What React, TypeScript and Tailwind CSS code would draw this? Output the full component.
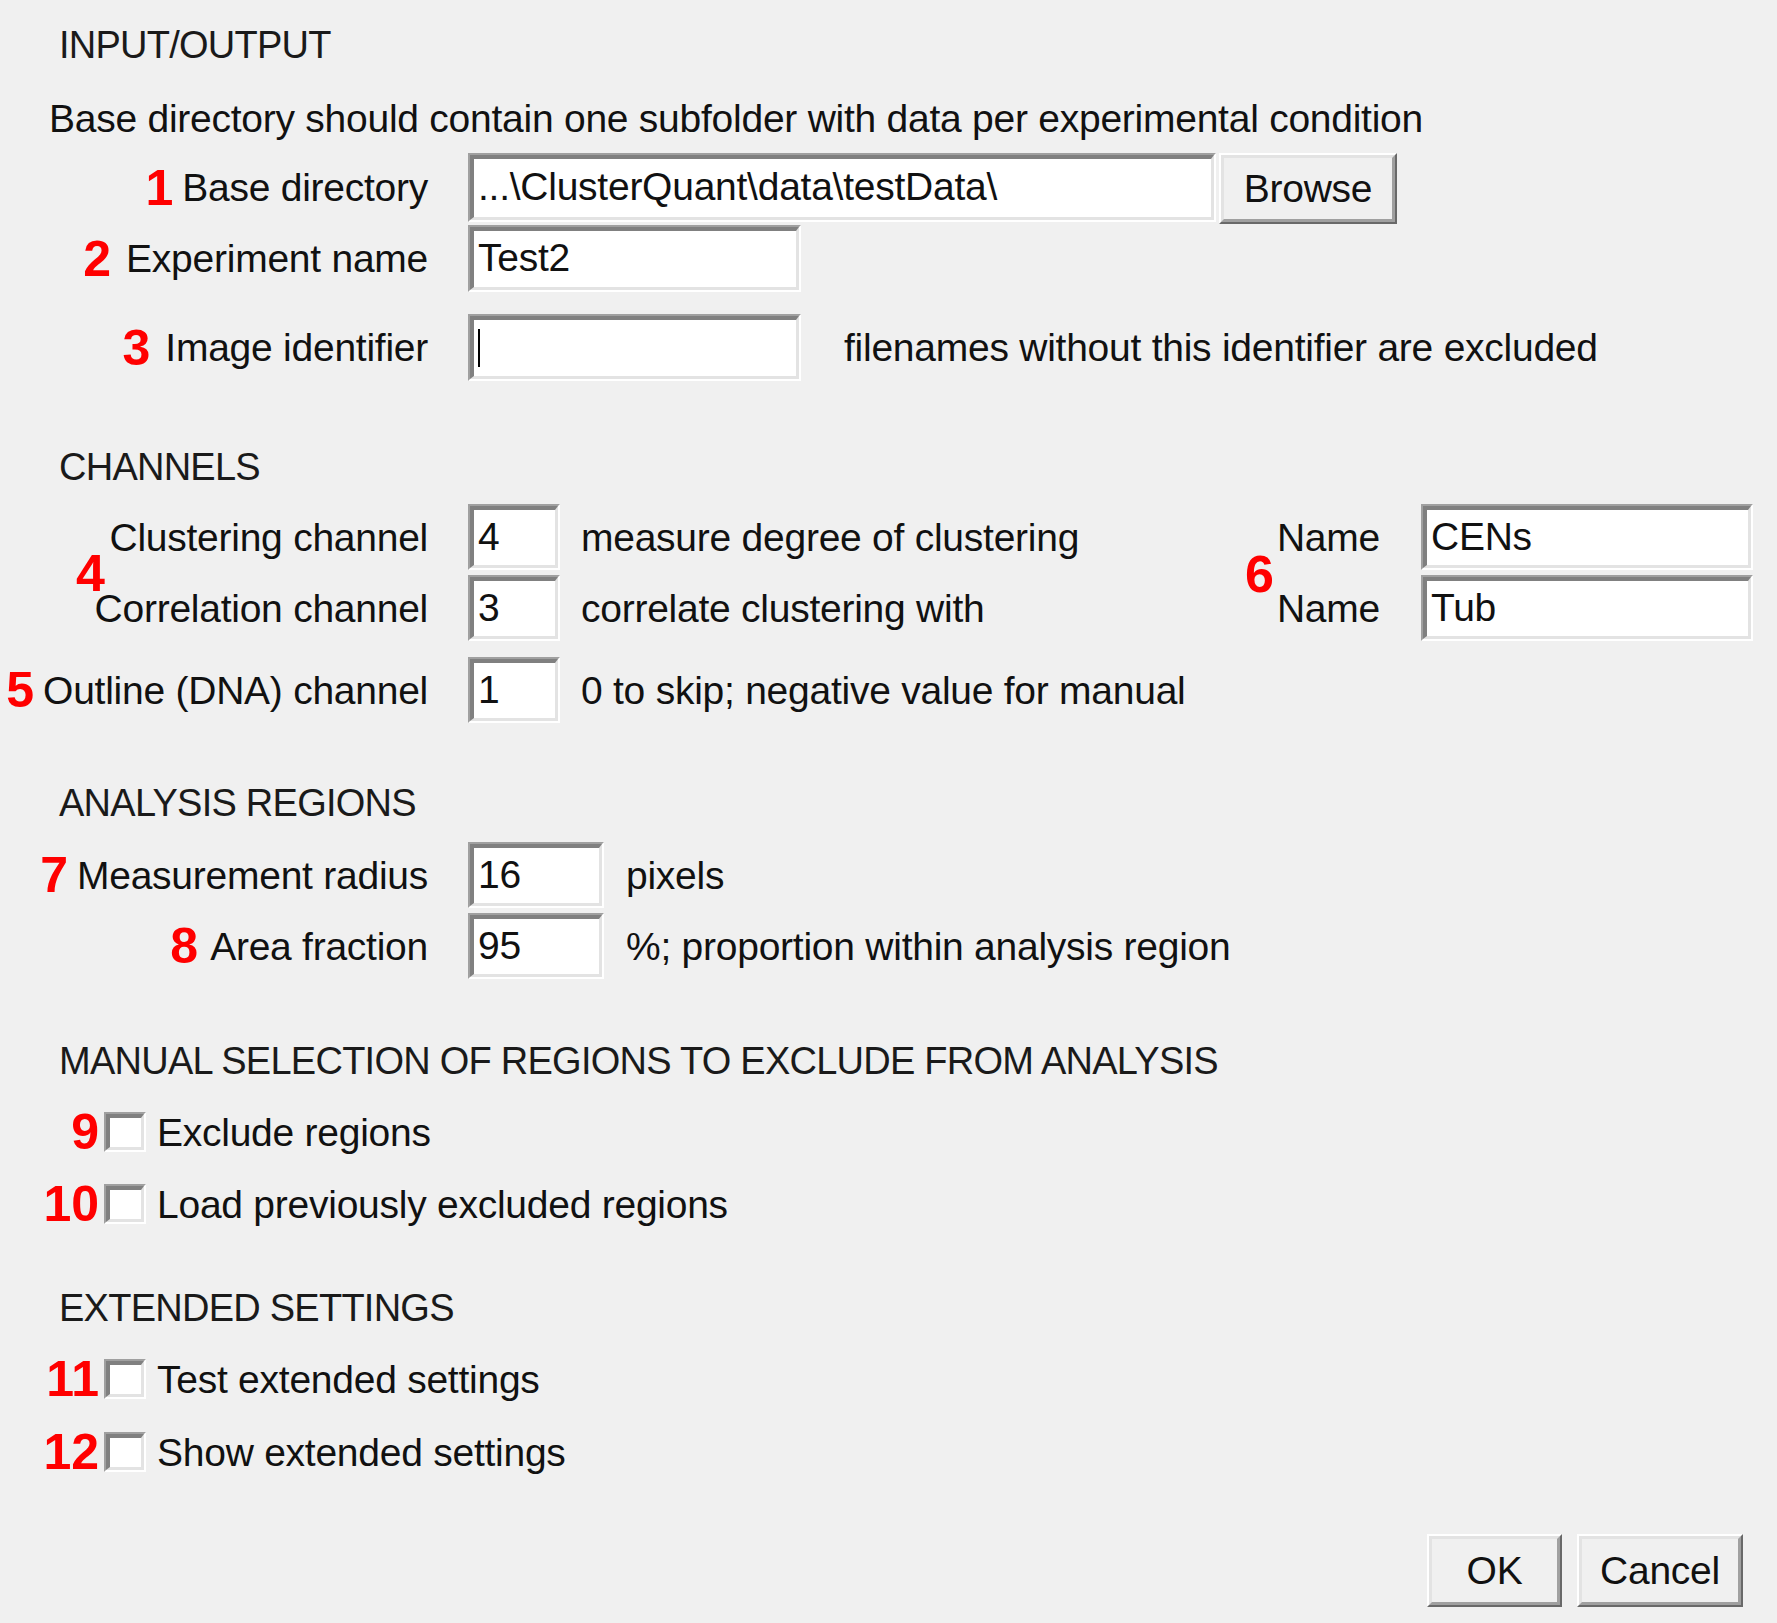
function Sunken({ className, children }: { className: string; children?: React.ReactNode }) {
  return (
    <div className={`${className} shrink-0 border-2 border-t-[#a0a0a0] border-l-[#a0a0a0] border-b-white border-r-white`}>
      <div className="flex h-full w-full items-center border-t-4 border-l-4 border-b-[3px] border-r-[3px] border-t-[#808080] border-l-[#808080] border-b-[#e3e3e3] border-r-[#e3e3e3] bg-white pb-[3px] pl-[4px] text-[39px] leading-none text-[#111]">
        {children}
      </div>
    </div>
  );
}

function Button({ className, label }: { className: string; label: string }) {
  return (
    <div className={`${className} shrink-0 border-2 border-t-white border-l-white border-b-[#696969] border-r-[#696969]`}>
      <div className="flex h-full w-full items-center justify-center border-[3px] border-t-[#e3e3e3] border-l-[#e3e3e3] border-b-[#a0a0a0] border-r-[#a0a0a0] bg-[#f0f0f0] text-[39px] leading-none text-[#111]">
        {label}
      </div>
    </div>
  );
}

function Num({ n, className = "" }: { n: string; className?: string }) {
  return <span className={`text-[50px] font-bold leading-none tracking-normal text-[#ff0000] ${className}`}>{n}</span>;
}

function Heading({ text, className }: { text: string; className: string }) {
  return (
    <div className={`${className} flex h-[40px] items-center pl-[59px] text-[38px] leading-none tracking-[-0.75px] text-[#1a1a1a]`}>
      {text}
    </div>
  );
}

function Label({ num, gap, text }: { num?: string; gap?: string; text: string }) {
  return (
    <div className="flex w-[428px] shrink-0 items-center justify-end">
      {num && <Num n={num} className={gap} />}
      <span>{text}</span>
    </div>
  );
}

function CheckRow({ num, text, className }: { num: string; text: string; className: string }) {
  return (
    <div className={`${className} flex h-[40px] items-center`}>
      <div className="flex w-[99px] justify-end">
        <Num n={num} />
      </div>
      <Sunken className="ml-[5px] h-[40px] w-[42px]" />
      <span className="ml-[11px]">{text}</span>
    </div>
  );
}

export default function App() {
  return (
    <div className="flex h-[1623px] w-[1777px] flex-col bg-[#f0f0f0] pt-[25px] font-['Liberation_Sans',Arial,sans-serif] text-[39px] leading-none tracking-[-0.25px] text-[#111]">
      <Heading text="INPUT/OUTPUT" className="" />
      <div className="mt-[33px] flex h-[40px] items-center pl-[49px]">
        Base directory should contain one subfolder with data per experimental condition
      </div>

      {/* input / output rows */}
      <div className="mt-[15px] flex h-[71px] items-start">
        <div className="flex h-[69px] items-center">
          <Label num="1" gap="mr-[9px]" text="Base directory" />
        </div>
        <Sunken className="ml-[40px] h-[69px] w-[748px]">...\ClusterQuant\data\testData\</Sunken>
        <Button className="ml-[3px] h-[71px] w-[178px]" label="Browse" />
      </div>
      <div className="mt-[1px] flex h-[67px] items-center">
        <Label num="2" gap="mr-[15px]" text="Experiment name" />
        <Sunken className="ml-[40px] h-[67px] w-[333px]">Test2</Sunken>
      </div>
      <div className="mt-[22px] flex h-[67px] items-center">
        <Label num="3" gap="mr-[15px]" text="Image identifier" />
        <Sunken className="ml-[40px] h-[67px] w-[333px]">
          <div className="mt-[2px] h-[38px] w-[2px] bg-black" />
        </Sunken>
        <span className="ml-[43px]">filenames without this identifier are excluded</span>
      </div>

      <Heading text="CHANNELS" className="mt-[66px]" />
      <div className="relative mt-[17px]">
        <div className="flex h-[66px] items-center">
          <Label text="Clustering channel" />
          <Sunken className="ml-[40px] h-[66px] w-[92px]">4</Sunken>
          <span className="ml-[21px] w-[664px] shrink-0">measure degree of clustering</span>
          <span className="w-[135px] shrink-0 text-right">Name</span>
          <Sunken className="ml-[41px] h-[66px] w-[332px]">CENs</Sunken>
        </div>
        <div className="mt-[5px] flex h-[66px] items-center">
          <Label text="Correlation channel" />
          <Sunken className="ml-[40px] h-[66px] w-[92px]">3</Sunken>
          <span className="ml-[21px] w-[664px] shrink-0">correlate clustering with</span>
          <span className="w-[135px] shrink-0 text-right">Name</span>
          <Sunken className="ml-[41px] h-[66px] w-[332px]">Tub</Sunken>
        </div>
        <Num n="4" className="absolute left-[76px] top-[43px] text-[52px]" />
        <Num n="6" className="absolute left-[1245px] top-[44px] text-[52px]" />
      </div>
      <div className="mt-[16px] flex h-[66px] items-center">
        <Label num="5" gap="mr-[9px]" text="Outline (DNA) channel" />
        <Sunken className="ml-[40px] h-[66px] w-[92px]">1</Sunken>
        <span className="ml-[21px]">0 to skip; negative value for manual</span>
      </div>

      <Heading text="ANALYSIS REGIONS" className="mt-[60px]" />
      <div className="mt-[19px] flex h-[66px] items-center">
        <Label num="7" gap="mr-[9px]" text="Measurement radius" />
        <Sunken className="ml-[40px] h-[66px] w-[136px]">16</Sunken>
        <span className="ml-[22px]">pixels</span>
      </div>
      <div className="mt-[5px] flex h-[66px] items-center">
        <Label num="8" gap="mr-[12px]" text="Area fraction" />
        <Sunken className="ml-[40px] h-[66px] w-[136px]">95</Sunken>
        <span className="ml-[22px]">%; proportion within analysis region</span>
      </div>

      <Heading text="MANUAL SELECTION OF REGIONS TO EXCLUDE FROM ANALYSIS" className="mt-[62px]" />
      <CheckRow num="9" text="Exclude regions" className="mt-[31px]" />
      <CheckRow num="10" text="Load previously excluded regions" className="mt-[32px]" />

      <Heading text="EXTENDED SETTINGS" className="mt-[64px]" />
      <CheckRow num="11" text="Test extended settings" className="mt-[31px]" />
      <CheckRow num="12" text="Show extended settings" className="mt-[33px]" />

      <div className="mt-[62px] flex justify-end gap-[15px] pr-[34px]">
        <Button className="h-[73px] w-[135px]" label="OK" />
        <Button className="h-[73px] w-[166px]" label="Cancel" />
      </div>
    </div>
  );
}
